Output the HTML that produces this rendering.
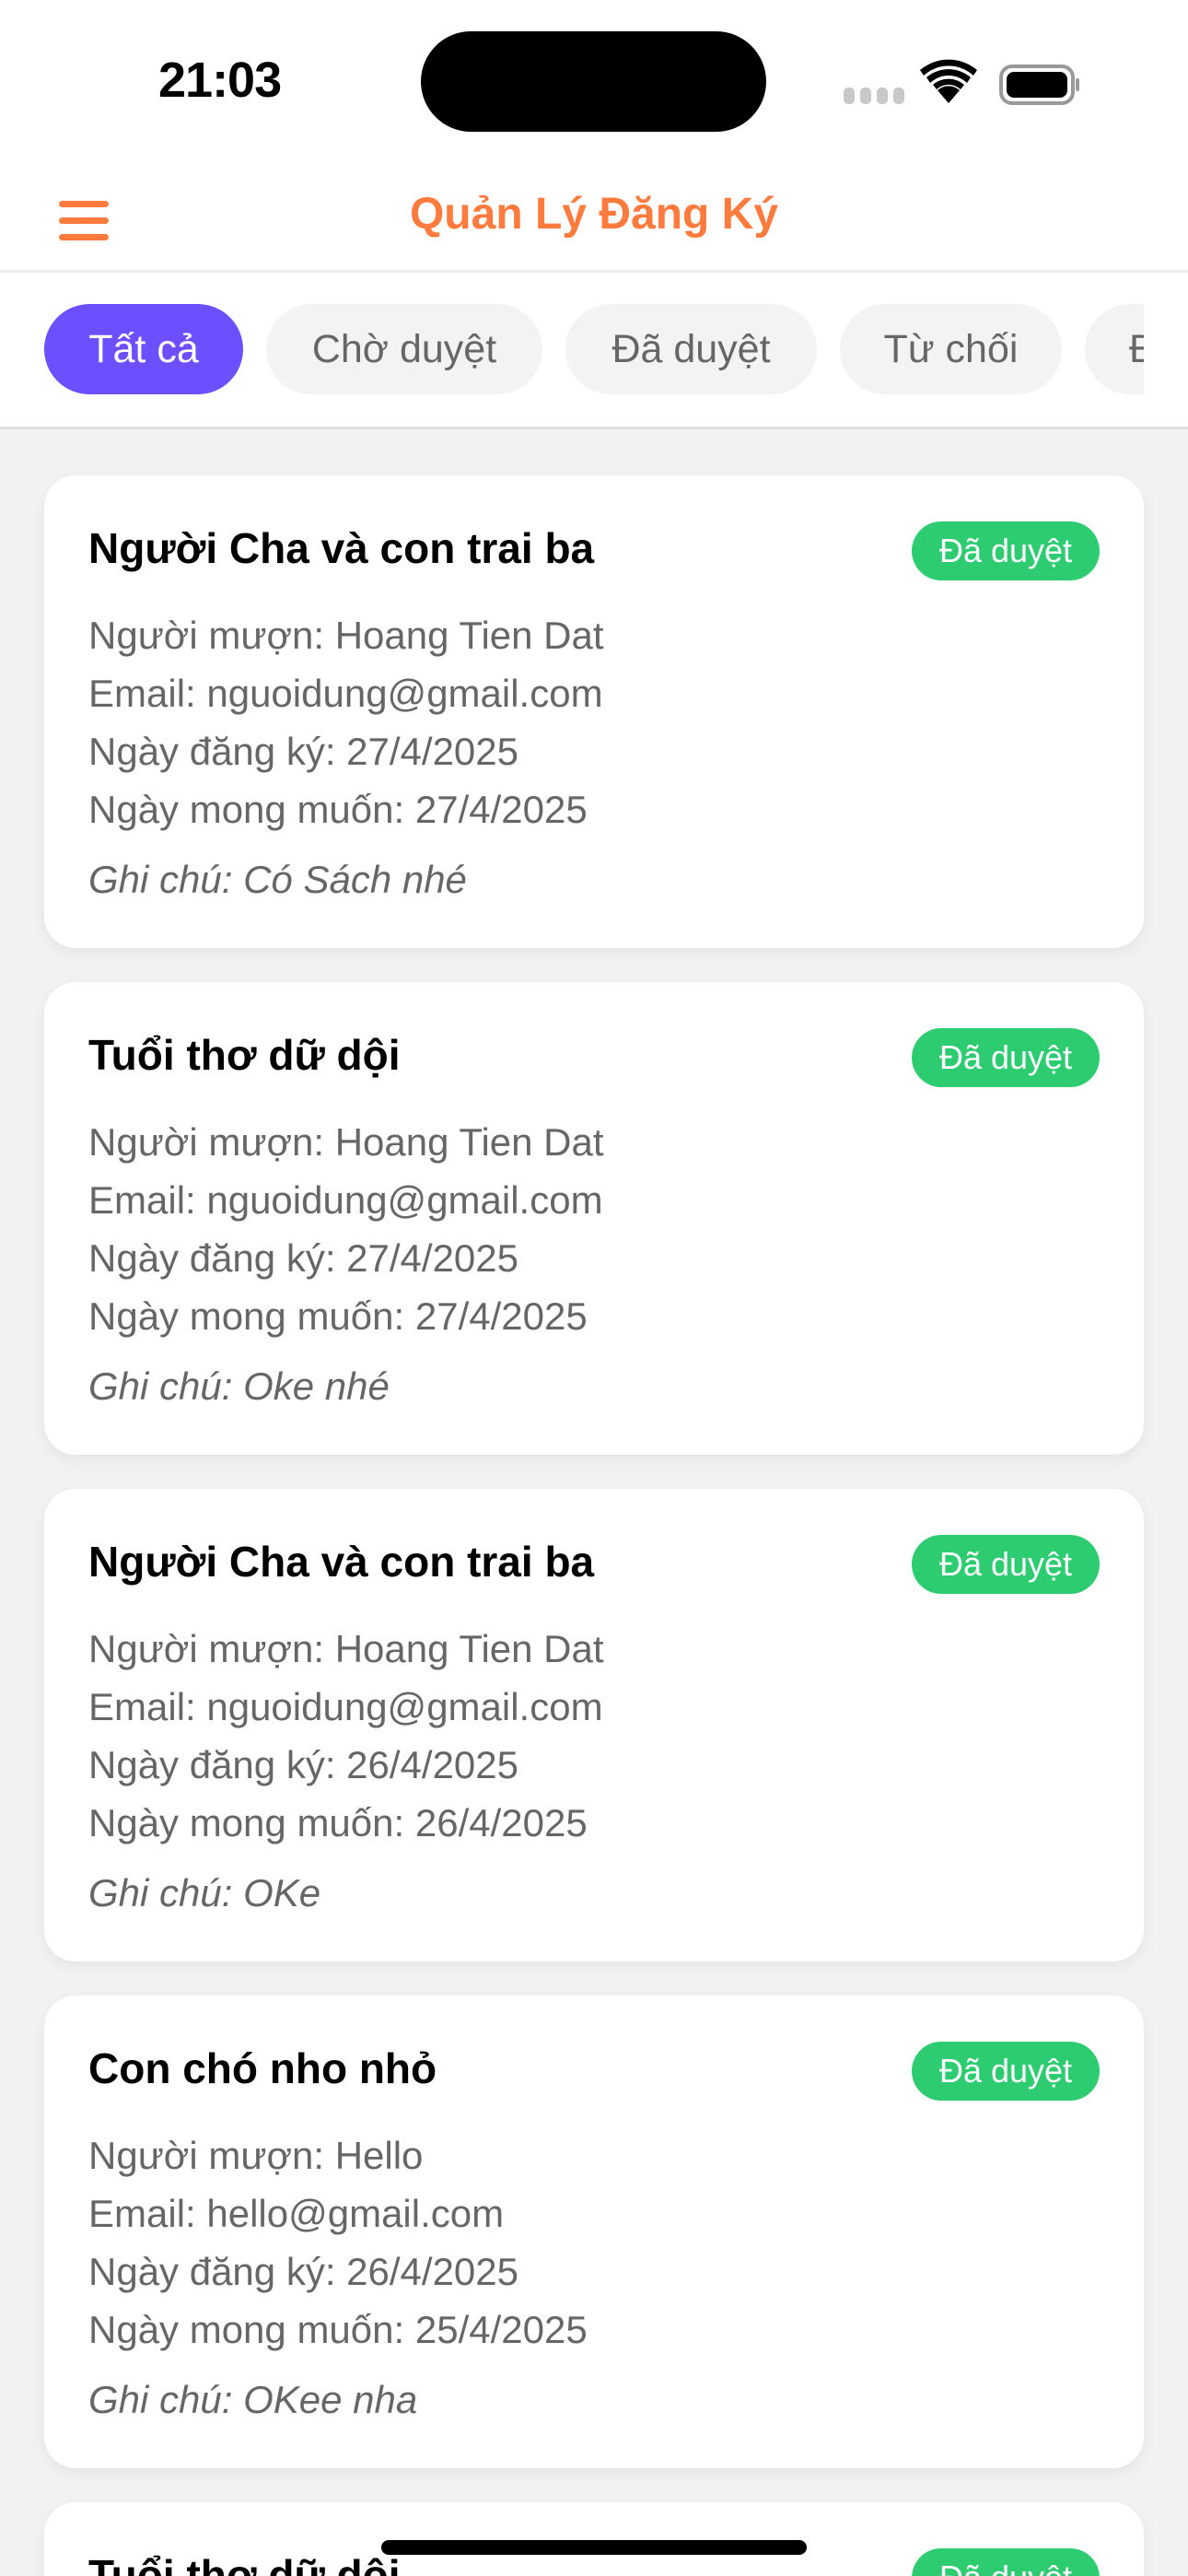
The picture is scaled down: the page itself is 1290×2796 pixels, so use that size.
<!DOCTYPE html>
<html style="width:1290px;height:2796px;overflow:hidden"><head><meta charset="utf-8"><style>
*{margin:0;padding:0;box-sizing:border-box}
body{width:1290px;height:2796px;overflow:hidden;background:#f2f2f2;font-family:"Liberation Sans","DejaVu Sans",sans-serif;position:relative}
.top{position:absolute;left:0;top:0;width:1290px;height:466px;background:#fff;border-bottom:3px solid #e0e0e0}
.time{position:absolute;left:172px;top:56px;font-size:54px;font-weight:bold;color:#000;letter-spacing:-1px}
.island{position:absolute;left:457px;top:34px;width:375px;height:109px;background:#000;border-radius:55px}
.hdr{position:absolute;left:0;top:293px;width:1290px;height:3px;background:#ececec}
.title{position:absolute;left:0;width:1290px;top:205px;text-align:center;color:#ff7a3d;font-size:48px;font-weight:bold}
.ham{position:absolute;left:64px;top:218px;width:54px}
.ham div{height:7px;background:#ff7a3d;border-radius:4px;margin-bottom:11px}
.chip{position:absolute;top:330px;height:98px;border-radius:49px;background:#f3f3f3;color:#666;font-size:43px;line-height:98px;text-align:center;white-space:nowrap}
.card{position:absolute;left:48px;width:1194px;height:513px;background:#fff;border-radius:34px;box-shadow:0 6px 16px rgba(0,0,0,0.06);overflow:hidden}
.ct{position:absolute;left:48px;top:52px;font-size:46px;font-weight:bold;color:#000;white-space:nowrap}
.badge{position:absolute;left:942px;top:50px;width:204px;height:64px;border-radius:32px;background:#2ecc71;color:#fff;font-size:36px;line-height:64px;text-align:center;white-space:nowrap}
.ln{position:absolute;left:48px;font-size:42px;color:#666;white-space:nowrap}
.note{font-style:italic}
.home{position:absolute;left:414px;top:2757px;width:462px;height:16px;background:#000;border-radius:8px}
</style></head><body>
<div class="top">
<div class="time">21:03</div>
<div class="island"></div>
<svg style="position:absolute;left:912px;top:62px" width="270" height="60">
<g fill="#c8c8c8"><rect x="4" y="33" width="12" height="18" rx="5"/><rect x="22" y="33" width="12" height="18" rx="5"/><rect x="40" y="33" width="12" height="18" rx="5"/><rect x="58" y="33" width="12" height="18" rx="5"/></g>
<g fill="#000">
<path d="M118 50 L106 36 A18 18 0 0 1 130 36 Z"/>
<path d="M101 30 A26 26 0 0 1 135 30 L131 35 A19 19 0 0 0 105 35 Z"/>
<path d="M94 22 A37 37 0 0 1 142 22 L138 28 A29 29 0 0 0 98 28 Z"/>
<path d="M87 14 A48 48 0 0 1 149 14 L145 20 A40 40 0 0 0 91 20 Z"/>
</g>
<rect x="175" y="10" width="78" height="40" rx="12" fill="none" stroke="#999" stroke-width="4"/>
<rect x="181" y="16" width="66" height="28" rx="8" fill="#000"/>
<rect x="256" y="23" width="4" height="14" rx="2" fill="#999"/>
</svg>
<div class="ham"><div></div><div></div><div></div></div>
<div class="title">Quản Lý Đăng Ký</div>
<div class="hdr"></div>
<div class="chip" style="left:48px;width:216px;background:#6c4ffe;color:#fff">Tất cả</div>
<div class="chip" style="left:289px;width:300px">Chờ duyệt</div>
<div class="chip" style="left:614px;width:273px">Đã duyệt</div>
<div class="chip" style="left:912px;width:241px">Từ chối</div>
<div style="position:absolute;left:1178px;top:330px;width:64px;height:98px;overflow:hidden"><div class="chip" style="left:0;top:0;width:200px;text-align:left;padding-left:48px">Đã</div></div>
</div>

<div class="card" style="top:516px"><div class="ct">Người Cha và con trai ba</div><div class="badge">Đã duyệt</div>
<div class="ln" style="top:150px">Người mượn: Hoang Tien Dat</div><div class="ln" style="top:213px">Email: nguoidung@gmail.com</div><div class="ln" style="top:276px">Ngày đăng ký: 27/4/2025</div><div class="ln" style="top:339px">Ngày mong muốn: 27/4/2025</div><div class="ln note" style="top:415px">Ghi chú: Có Sách nhé</div></div>

<div class="card" style="top:1066px"><div class="ct">Tuổi thơ dữ dội</div><div class="badge">Đã duyệt</div>
<div class="ln" style="top:150px">Người mượn: Hoang Tien Dat</div><div class="ln" style="top:213px">Email: nguoidung@gmail.com</div><div class="ln" style="top:276px">Ngày đăng ký: 27/4/2025</div><div class="ln" style="top:339px">Ngày mong muốn: 27/4/2025</div><div class="ln note" style="top:415px">Ghi chú: Oke nhé</div></div>

<div class="card" style="top:1616px"><div class="ct">Người Cha và con trai ba</div><div class="badge">Đã duyệt</div>
<div class="ln" style="top:150px">Người mượn: Hoang Tien Dat</div><div class="ln" style="top:213px">Email: nguoidung@gmail.com</div><div class="ln" style="top:276px">Ngày đăng ký: 26/4/2025</div><div class="ln" style="top:339px">Ngày mong muốn: 26/4/2025</div><div class="ln note" style="top:415px">Ghi chú: OKe</div></div>

<div class="card" style="top:2166px"><div class="ct">Con chó nho nhỏ</div><div class="badge">Đã duyệt</div>
<div class="ln" style="top:150px">Người mượn: Hello</div><div class="ln" style="top:213px">Email: hello@gmail.com</div><div class="ln" style="top:276px">Ngày đăng ký: 26/4/2025</div><div class="ln" style="top:339px">Ngày mong muốn: 25/4/2025</div><div class="ln note" style="top:415px">Ghi chú: OKee nha</div></div>

<div class="card" style="top:2716px;height:80px;border-radius:34px 34px 0 0"><div class="ct">Tuổi thơ dữ dội</div><div class="badge">Đã duyệt</div></div>
<div class="home"></div>
</body></html>
